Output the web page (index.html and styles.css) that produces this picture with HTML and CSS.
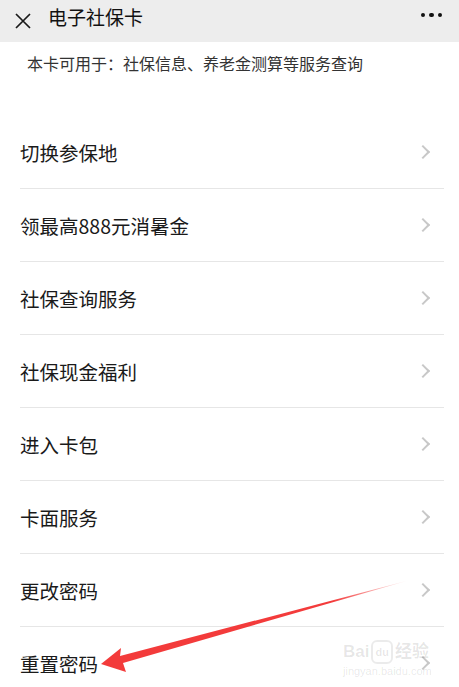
FILE: index.html
```html
<!doctype html>
<html>
<head>
<meta charset="utf-8">
<meta name="viewport" content="width=device-width, initial-scale=1.0">
<link rel="stylesheet" href="styles.css">
<title>电子社保卡</title>
</head>
<body>
<div class="topbar">
  <svg class="close" width="18" height="16" viewBox="0 0 18 16"><path d="M2 1 L16 15 M16 1 L2 15" stroke="#1a1a1a" stroke-width="1.7" fill="none"/></svg>
  <span class="title">电子社保卡</span>
  <span class="more"><i></i><i></i><i></i></span>
</div>

<p class="tip">本卡可用于：社保信息、养老金测算等服务查询</p>

<ul class="menu">
  <li>切换参保地</li>
  <li>领最高888元消暑金</li>
  <li>社保查询服务</li>
  <li>社保现金福利</li>
  <li>进入卡包</li>
  <li>卡面服务</li>
  <li>更改密码</li>
  <li>重置密码</li>
</ul>

<div class="mark">
  <div class="mark-top"><span>Bai</span><span class="paw">du</span><span>经验</span></div>
  <div class="mark-url">jingyan.baidu.com</div>
</div>

<svg class="arrow" width="459" height="687" viewBox="0 0 459 687">
  <defs>
    <linearGradient id="fade" x1="101" y1="664" x2="410" y2="580" gradientUnits="userSpaceOnUse">
      <stop offset="0" stop-color="#f33b3b"/>
      <stop offset="0.75" stop-color="#f33b3b"/>
      <stop offset="1" stop-color="#f33b3b" stop-opacity="0"/>
    </linearGradient>
  </defs>
  <polygon points="101,664 121,648 120,656 410,580 123,663 126,672" fill="url(#fade)"/>
</svg>
</body>
</html>
```

FILE: styles.css
```css
html, body {
    margin: 0;
    padding: 0;
}
body {
    font-family: "Noto Sans CJK SC", "Liberation Sans", sans-serif;
    background-color: white;
    color: #1a1a1a;
    position: relative;
    height: 687px;
    overflow: hidden;
}
.topbar {
    height: 42px;
    background-color: #ededed;
    display: flex;
    align-items: center;
    padding: 0 17px 0 14px;
}
.close {
    margin-top: -1px;
}
.title {
    margin-left: 16px;
    font-size: 19px;
    line-height: 26px;
    color: #111;
    flex: 1;
    margin-top: -8px;
}
.more {
    display: flex;
    gap: 4px;
    margin-top: -12px;
}
.more i {
    width: 4.5px;
    height: 4.5px;
    border-radius: 50%;
    background-color: #111;
}
.tip {
    margin: 0;
    padding: 10px 0 0 27px;
    height: 64px;
    box-sizing: border-box;
    font-size: 16px;
    line-height: 22px;
    color: #333;
}
.menu {
    list-style: none;
    margin: 10px 15px 0 20px;
    padding: 0;
}
.menu li {
    height: 72px;
    border-bottom: 1px solid #e6e6e6;
    display: flex;
    align-items: center;
    justify-content: space-between;
    font-size: 19.5px;
    color: #1a1a1a;
}
.menu li::after {
    content: "";
    width: 8px;
    height: 8px;
    border-top: 2px solid #c8c8c8;
    border-right: 2px solid #c8c8c8;
    transform: rotate(45deg);
    margin-right: 16px;
}
.mark {
    position: absolute;
    left: 343px;
    top: 640px;
    color: rgba(0, 0, 0, 0.1);
    font-family: "Liberation Sans", "Noto Sans CJK SC", sans-serif;
}
.mark-top {
    display: flex;
    align-items: center;
    gap: 2px;
    font-size: 17px;
    font-weight: bold;
    line-height: 20px;
}
.paw {
    font-size: 11px;
    border: 2px solid rgba(0, 0, 0, 0.08);
    border-radius: 6px;
    padding: 0 2px;
}
.mark-url {
    font-size: 11px;
    line-height: 14px;
}
.arrow {
    position: absolute;
    left: 0;
    top: 0;
}
```
